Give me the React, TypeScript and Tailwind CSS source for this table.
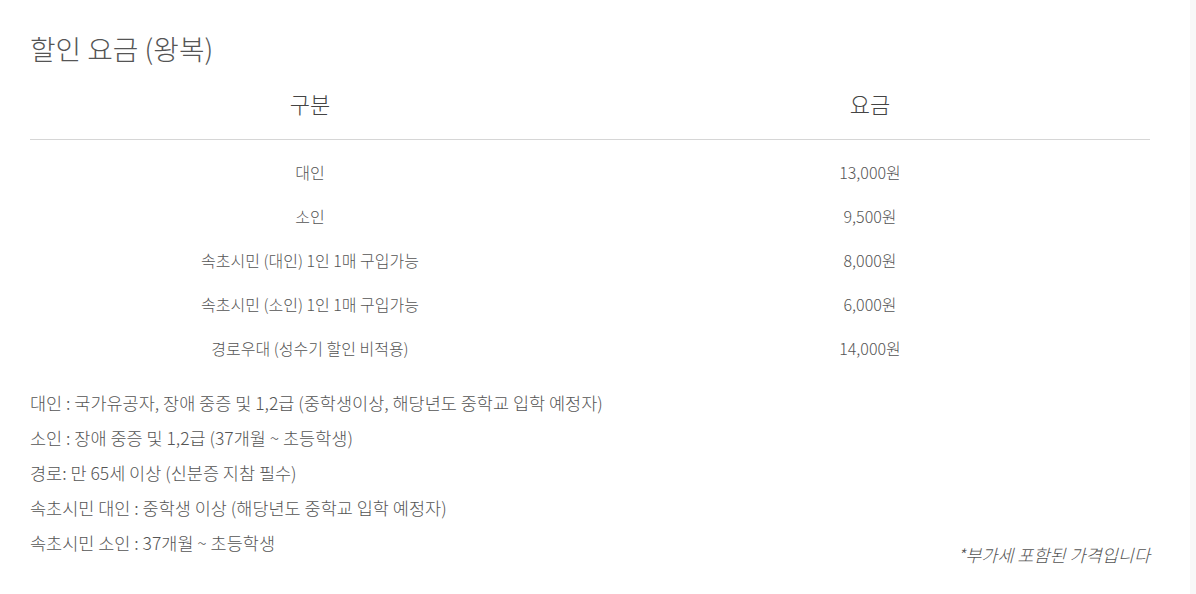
import React from "react";

const rows: [string, string][] = [
  ["대인", "13,000원"],
  ["소인", "9,500원"],
  ["속초시민 (대인) 1인 1매 구입가능", "8,000원"],
  ["속초시민 (소인) 1인 1매 구입가능", "6,000원"],
  ["경로우대 (성수기 할인 비적용)", "14,000원"],
];

const notes = [
  "대인 : 국가유공자, 장애 중증 및 1,2급 (중학생이상, 해당년도 중학교 입학 예정자)",
  "소인 : 장애 중증 및 1,2급 (37개월 ~ 초등학생)",
  "경로: 만 65세 이상 (신분증 지참 필수)",
  "속초시민 대인 : 중학생 이상 (해당년도 중학교 입학 예정자)",
];

export default function App() {
  return (
    <div
      className="flex w-[1196px] h-[594px] bg-white text-[#555] font-light"
      style={{ fontFamily: '"Noto Sans CJK KR", "Noto Sans", sans-serif' }}
    >
      <div className="flex-1 pl-[30px] pr-[40px] pt-[29px]">
        <h2 className="text-[27.8px] leading-[39px] font-light text-[#555]">할인 요금 (왕복)</h2>
        <div className="grid grid-cols-2 h-[72px] items-center border-b border-[#d6d6d6] text-[22px] text-[#444]">
          <div className="text-center">구분</div>
          <div className="text-center">요금</div>
        </div>
        <div className="pt-[10px]">
          {rows.map(([a, b]) => (
            <div key={a} className="grid grid-cols-2 h-[44px] items-center text-[16px]">
              <div className="text-center">{a}</div>
              <div className="text-center">{b}</div>
            </div>
          ))}
        </div>
        <div className="pt-[16px] text-[17.5px]">
          {notes.map((n) => (
            <div key={n} className="h-[35px] flex items-center">
              {n}
            </div>
          ))}
          <div className="h-[35px] flex items-center justify-between">
            <span>속초시민 소인 : 37개월 ~ 초등학생</span>
            <span className="italic text-[17.5px] text-[#555] translate-y-[12px]">*부가세 포함된 가격입니다</span>
          </div>
        </div>
      </div>
      <div className="w-[6px] h-full bg-[#f8f8f8]" />
    </div>
  );
}
